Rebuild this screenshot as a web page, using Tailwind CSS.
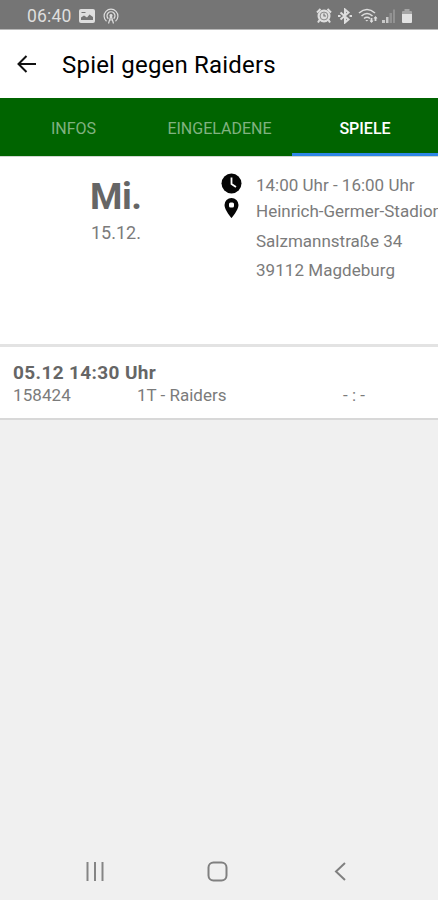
<!DOCTYPE html>
<html lang="de">
<head>
    <meta charset="UTF-8">
    <meta name="viewport" content="width=device-width, initial-scale=1.0">
    <title>Spiel gegen Raiders</title>
    <script src="https://cdn.jsdelivr.net/npm/@tailwindcss/browser@4"></script>
</head>
<body class="bg-[#f0f0f0] font-['Roboto',sans-serif] text-[#7b7b7b]">
    <div class="flex h-[900px] w-[438px] flex-col overflow-hidden">
        <!-- Status bar -->
        <div class="flex h-[29px] shrink-0 items-center bg-[#757575] pt-[3px] pr-[25px] pl-[27px] text-[#dedede]">
            <span class="w-[52px] text-[17.5px] leading-5 tracking-[0.2px]">06:40</span>
            <svg class="h-[14px] w-4" viewBox="0 0 16 14" fill="none">
                <rect width="16" height="14" rx="2" fill="#dedede"/>
                <path d="M2 11V8.500l3-2 3 2 2.500-3L14 8v3z" fill="#757575"/>
                <path d="M2.500 3.500h4" stroke="#757575"/>
            </svg>
            <svg class="ml-2 h-4 w-4" viewBox="0 0 16 16" fill="none" stroke="#dedede" stroke-width="1.200">
                <path d="M3.500 13.300a6.900 6.900 0 1 1 9 0M5.300 10.700a4 4 0 1 1 5.400 0"/>
                <path d="M8 7.500L5.500 15.500M8 7.500l2.500 8M6.500 12h3"/>
                <circle cx="8" cy="7.500" r="1" fill="#dedede"/>
            </svg>
            <div class="ml-auto flex items-center">
                <svg class="h-4 w-4" viewBox="0 0 16 16" fill="none">
                    <circle cx="8" cy="8" r="6.500" fill="#dedede"/>
                    <path d="M1 4.500L4.500 1M11.500 1L15 4.500M3.500 12L2 14.500M12.500 12l1.500 2.500" stroke="#dedede" stroke-width="2"/>
                    <circle cx="8" cy="8" r="3.900" stroke="#757575" stroke-width=".8"/>
                    <path d="M8 5.500V8h2" stroke="#757575" stroke-width="1.200"/>
                </svg>
                <svg class="ml-[5px] h-4 w-4" viewBox="0 0 16 16" fill="none" stroke="#dedede" stroke-width="2">
                    <path d="M3.500 4.500l8 7L8 14.500v-13l3.500 3-8 7"/>
                    <path d="M1 8h2.500M12.500 8H15"/>
                </svg>
                <svg class="ml-[5px] h-4 w-5" viewBox="0 0 20 16" fill="none" stroke="#dedede" stroke-width="1.600">
                    <path d="M1 5q8-7 16 0M3.500 8q5.500-5 11 0M6 10.500q3-2.500 6 0"/>
                    <path d="M7.300 12h3L8.800 13.500z" fill="#dedede" stroke="none"/>
                    <path d="M13.500 10v4M17.500 9v4" stroke-width="1.800"/>
                    <path d="M11.500 12.500h4l-2 2.500zM15.500 10.500h4l-2-2.500z" fill="#dedede" stroke="none"/>
                </svg>
                <svg class="ml-[3px] h-4 w-[15px]" viewBox="0 0 15 16">
                    <path d="M1 12h3v3H1zM5 9h2.500v6H5z" fill="#c8c8c8"/>
                    <path d="M8.500 5H11v10H8.500zM12 1.500h2V15h-2z" fill="#929292"/>
                </svg>
                <svg class="ml-[5px] h-4 w-3" viewBox="0 0 12 16">
                    <path d="M3.500 1h5v2H10q1 0 1 1v2H1V4q0-1 1-1h1.500z" fill="#a5a5a5"/>
                    <path d="M1 6h10v8q0 1-1 1H2q-1 0-1-1z" fill="#e2e2e2"/>
                </svg>
            </div>
        </div>

        <!-- App bar -->
        <header class="flex h-[69px] shrink-0 items-center border-t border-[#b8b8b8] bg-white pl-[17px] text-black">
            <svg class="h-[18px] w-5" viewBox="0 0 20 18" fill="none" stroke="#111" stroke-width="2">
                <path d="M9.500 1L1.500 9l8 8M1.500 9H19"/>
            </svg>
            <h1 class="ml-[25px] pt-[1px] text-[24px] leading-8 tracking-[0.2px]">Spiel gegen Raiders</h1>
        </header>

        <!-- Tabs -->
        <nav class="grid h-[58px] shrink-0 grid-cols-3 bg-[#006400] text-center text-[16px] leading-[57px] text-[#80b280]">
            <div class="pt-[2px] pl-px">INFOS</div>
            <div class="pt-[2px] pl-px">EINGELADENE</div>
            <div class="h-[58px] border-b-[3px] border-[#2f86e6] pt-[2px] font-medium text-white">SPIELE</div>
        </nav>

        <!-- Date, time and place -->
        <section class="flex h-[191px] shrink-0 border-t border-b-[3px] border-t-[#d0d8d0] border-b-[#e3e3e3] bg-white">
            <div class="flex w-[221px] shrink-0 flex-col pt-[18px] pl-[90px]">
                <span class="text-[37px] leading-[44px] font-bold tracking-[-0.5px] text-[#666]">Mi.</span>
                <span class="mt-[2px] pl-px text-[18px] leading-6">15.12.</span>
            </div>
            <div class="flex w-[35px] shrink-0 flex-col pt-[16px]">
                <svg class="h-[21px] w-[21px]" viewBox="0 0 21 21" fill="none">
                    <circle cx="10.500" cy="10.500" r="10" fill="#050505"/>
                    <path d="M10.500 4.500v6.500l4.500 3" stroke="#fff" stroke-width="1.800"/>
                </svg>
                <svg class="mt-[4px] ml-[3px] h-5 w-[15px]" viewBox="0 0 15 20">
                    <path d="M7.500 0A7 7 0 0 0 .5 7c0 5 7 13 7 13s7-8 7-13a7 7 0 0 0-7-7z" fill="#050505"/>
                    <rect x="5" y="4.500" width="5" height="5" rx="1.500" fill="#fff"/>
                </svg>
            </div>
            <div class="pt-[15px] text-[17px] leading-[29px] whitespace-nowrap">
                <div class="leading-[26px]">14:00 Uhr - 16:00 Uhr</div>
                <div class="leading-[27px]">Heinrich-Germer-Stadion</div>
                <div class="pt-[2px]">Salzmannstraße 34</div>
                <div class="tracking-[0.05px]">39112 Magdeburg</div>
            </div>
        </section>

        <!-- Match row -->
        <section class="h-[73px] shrink-0 border-b-2 border-[#d8d8d8] bg-white pt-[14px] pl-[13px]">
            <div class="text-[19px] leading-[23px] font-bold tracking-[0.37px] text-[#666]">05.12 14:30 Uhr</div>
            <div class="flex text-[17px] leading-[22px]">
                <span class="w-[124px] tracking-[0.1px]">158424</span>
                <span class="w-[206px]">1T - Raiders</span>
                <span>- : -</span>
            </div>
        </section>

        <!-- System navigation -->
        <footer class="mt-auto flex h-[58px] shrink-0 items-center pl-[86px]">
            <svg class="h-[19px] w-[18px]" viewBox="0 0 18 19" stroke="#858585" stroke-width="2">
                <path d="M1.500 0v19M9 0v19M16.500 0v19"/>
            </svg>
            <svg class="ml-[103px] h-[21px] w-[21px]" viewBox="0 0 21 21" fill="none" stroke="#808080" stroke-width="2">
                <rect x="1.500" y="1.500" width="18" height="18" rx="5"/>
            </svg>
            <svg class="ml-[106px] h-[19px] w-3" viewBox="0 0 12 19" fill="none" stroke="#808080" stroke-width="2">
                <path d="M11 1L2 9.500l9 8.500"/>
            </svg>
        </footer>
    </div>
</body>
</html>
